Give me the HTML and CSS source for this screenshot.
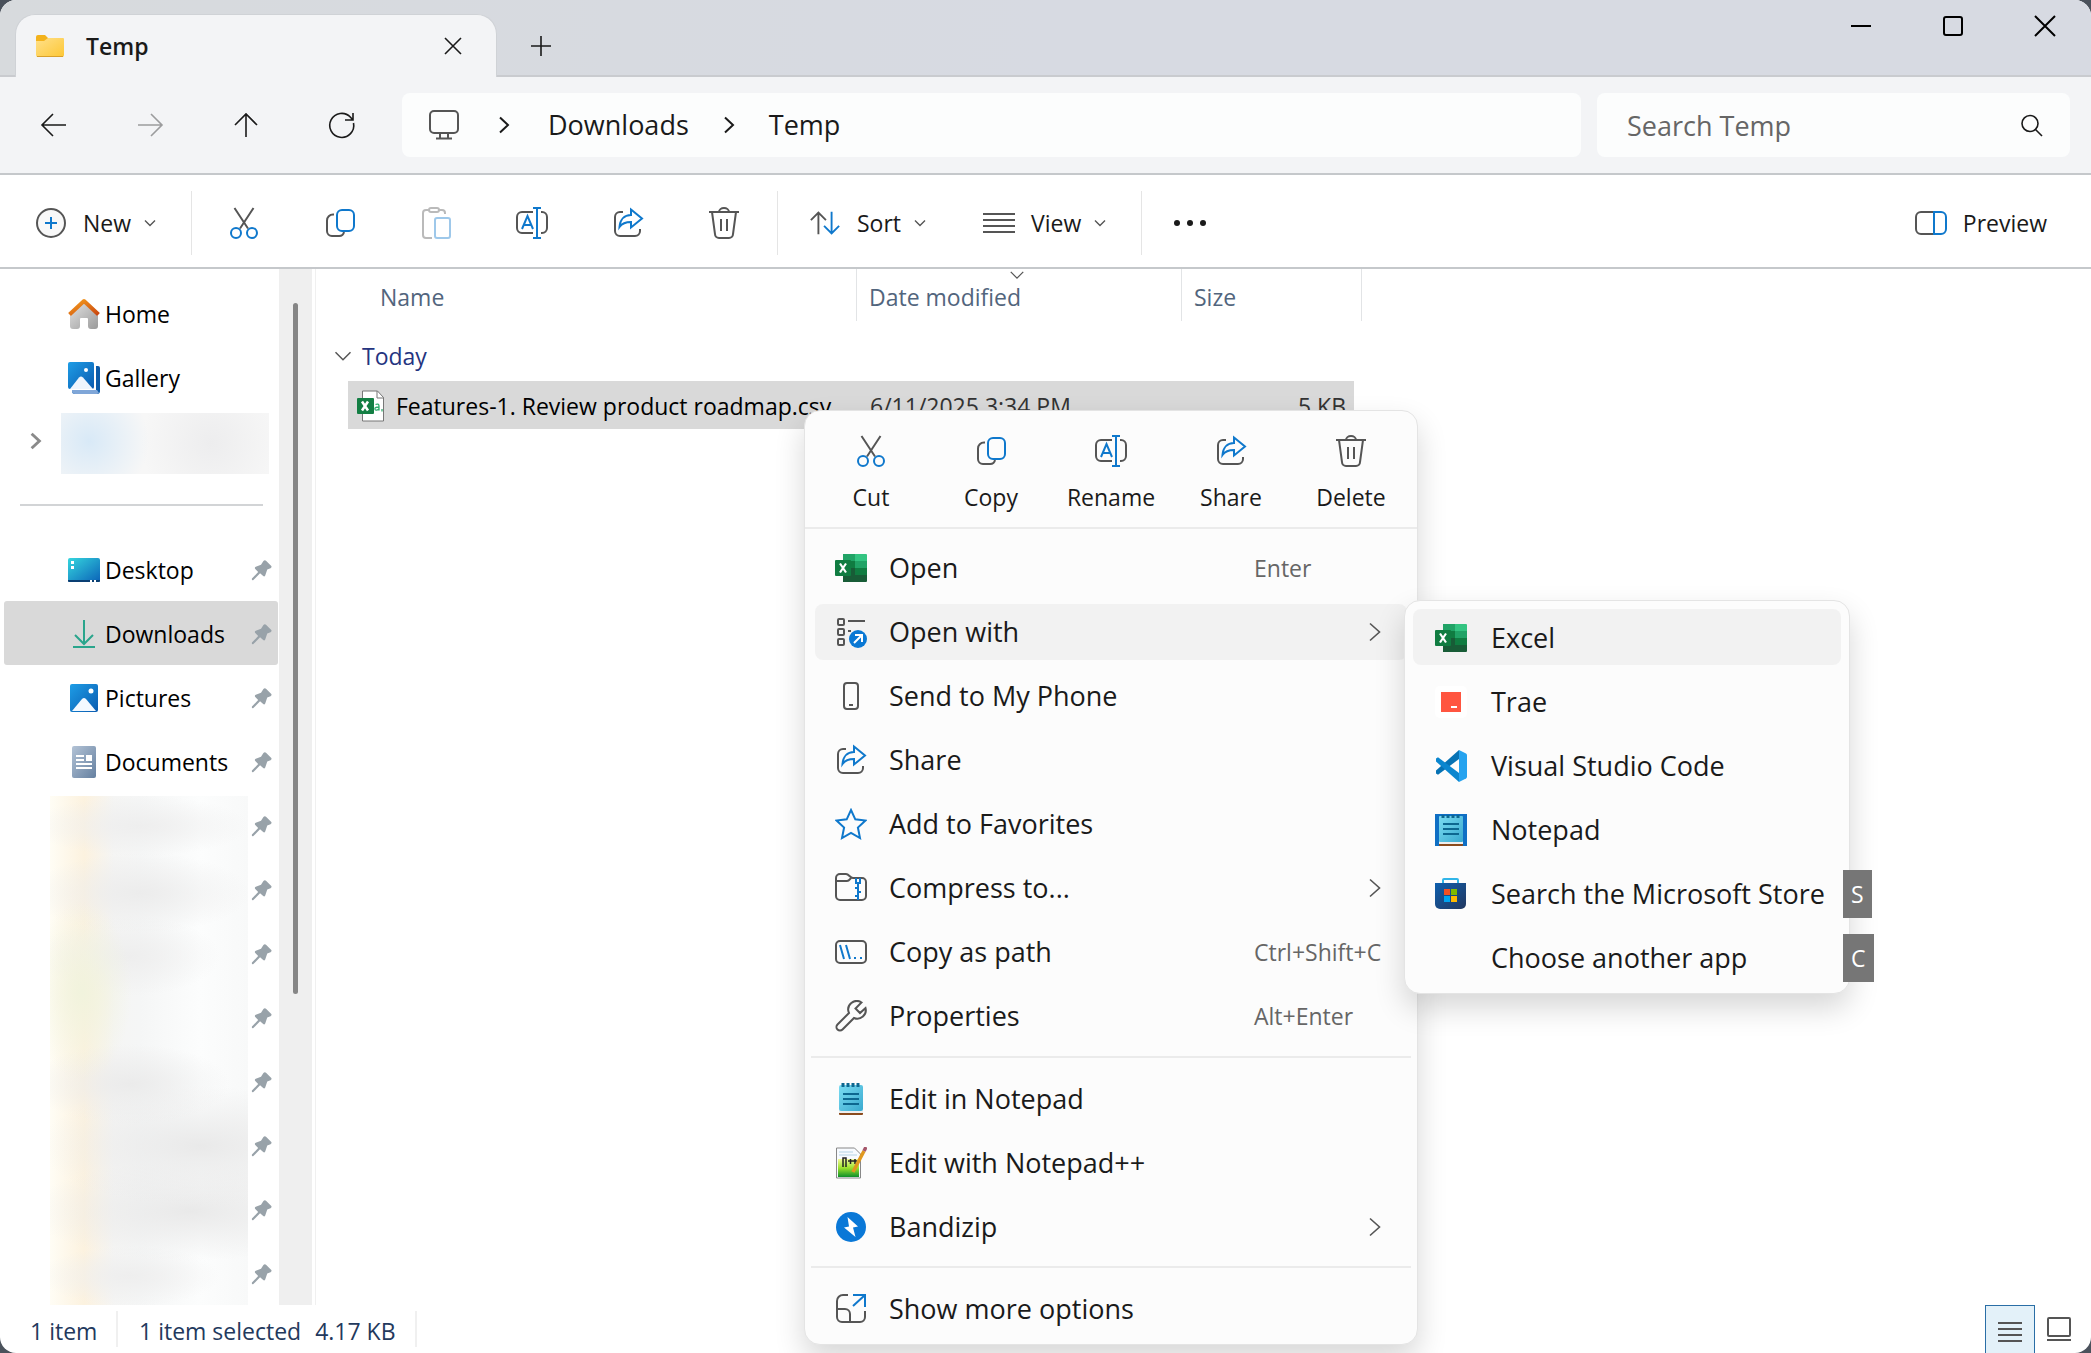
FILE: index.html
```html
<!DOCTYPE html>
<html lang="en">
<head>
<meta charset="utf-8">
<title>Temp</title>
<link rel="stylesheet" href="styles.css">
</head>
<body>
<svg class="sprite" aria-hidden="true">
  <defs>
    <linearGradient id="g-folder" x1="0" y1="0" x2="1" y2="1"><stop offset="0" stop-color="#ffe08a"/><stop offset="1" stop-color="#fdc735"/></linearGradient>
    <linearGradient id="g-roof" x1="0" y1="0" x2="1" y2="1"><stop offset="0" stop-color="#f7a01e"/><stop offset="1" stop-color="#c8450f"/></linearGradient>
    <linearGradient id="g-wall" x1="0" y1="0" x2="1" y2="1"><stop offset="0" stop-color="#e2e2e2"/><stop offset="1" stop-color="#9a9a9a"/></linearGradient>
    <linearGradient id="g-photo" x1="0" y1="0" x2="1" y2="1"><stop offset="0" stop-color="#1e9de6"/><stop offset="1" stop-color="#0a5bb0"/></linearGradient>
    <linearGradient id="g-desk" x1="0" y1="0" x2="1" y2="1"><stop offset="0" stop-color="#35d6de"/><stop offset="1" stop-color="#0b62b8"/></linearGradient>
    <linearGradient id="g-doc" x1="0" y1="0" x2="1" y2="1"><stop offset="0" stop-color="#b3c3d6"/><stop offset="1" stop-color="#6580a0"/></linearGradient>
    <linearGradient id="g-note" x1="0" y1="0" x2="1" y2="1"><stop offset="0" stop-color="#7bdcf2"/><stop offset="1" stop-color="#39a9cf"/></linearGradient>
    <linearGradient id="g-npp" x1="0" y1="0" x2="0" y2="1"><stop offset="0" stop-color="#f4fb9a"/><stop offset=".5" stop-color="#9be02c"/><stop offset="1" stop-color="#0d8f2a"/></linearGradient>
    <linearGradient id="g-store" x1="0" y1="0" x2="1" y2="1"><stop offset="0" stop-color="#0e5fae"/><stop offset="1" stop-color="#22375f"/></linearGradient>
  </defs>
  <symbol id="folder" viewBox="0 0 32 32"><path d="M2 7a2 2 0 0 1 2-2h7l3 3v5H2z" fill="#f3b21b"/><path d="M2 11h8l4-3h15a1 1 0 0 1 1 1v16a2 2 0 0 1-2 2H4a2 2 0 0 1-2-2z" fill="url(#g-folder)"/><path d="M3 26.500h26" stroke="#d9a02a"/></symbol>
  <symbol id="x" viewBox="0 0 32 32"><path d="M8 8l16 16M24 8L8 24"/></symbol>
  <symbol id="plus" viewBox="0 0 32 32"><path d="M16 6v20M6 16h20"/></symbol>
  <symbol id="min" viewBox="0 0 32 32"><path d="M6 16h20"/></symbol>
  <symbol id="max" viewBox="0 0 32 32"><rect x="7" y="7" width="18" height="18" rx="2"/></symbol>
  <symbol id="winx" viewBox="0 0 32 32"><path d="M6 6l20 20M26 6L6 26"/></symbol>
  <symbol id="back" viewBox="0 0 32 32"><path d="M28 16H4M15 5L4 16l11 11"/></symbol>
  <symbol id="fwd" viewBox="0 0 32 32"><path d="M4 16h24M17 5l11 11-11 11"/></symbol>
  <symbol id="up" viewBox="0 0 32 32"><path d="M16 28V5M5 16L16 5l11 11"/></symbol>
  <symbol id="refresh" viewBox="0 0 32 32"><path d="M27.500 14A12 12 0 1 1 24.500 8.200l2 2.300M27 4v7h-8"/></symbol>
  <symbol id="monitor" viewBox="0 0 32 32"><rect x="2" y="2" width="28" height="22" rx="4"/><path d="M12 24v5M20 24v5M8 29.500h16"/></symbol>
  <symbol id="cright" viewBox="0 0 32 32"><path d="M12 8.500l8 7.500-8 7.500"/></symbol>
  <symbol id="cmenu" viewBox="0 0 32 32"><path d="M11 7.500l9.500 8.500-9.500 8.500"/></symbol>
  <symbol id="cdown" viewBox="0 0 16 16"><path d="M3 5.500l5 5 5-5"/></symbol>
  <symbol id="search" viewBox="0 0 32 32"><circle cx="14" cy="13.500" r="8"/><path d="M19.500 19.500L26 26"/></symbol>
  <symbol id="new" viewBox="0 0 32 32"><circle cx="16" cy="16" r="14" fill="#f8f8f8"/><path class="blue" d="M16 10v12M10 16h12"/></symbol>
  <symbol id="cut" viewBox="0 0 32 32"><path d="M6.500 1l13.500 20.500M25.500 1L12 21.500"/><circle class="blue" cx="8" cy="26" r="5"/><circle class="blue" cx="24" cy="26" r="5"/></symbol>
  <symbol id="copy" viewBox="0 0 32 32"><path d="M10 7.500H9a6 6 0 0 0-6 6V24a5 5 0 0 0 5 5h7a5 5 0 0 0 5-4"/><rect class="blue" x="13" y="3" width="17" height="21" rx="5"/></symbol>
  <symbol id="paste" viewBox="0 0 32 32"><path d="M9 3H6a3 3 0 0 0-3 3v22a3 3 0 0 0 3 3h6M19 3h3a3 3 0 0 1 3 3v1"/><rect x="9" y="1" width="10" height="4" rx="2"/><rect class="blue" x="15" y="11" width="15" height="20" rx="2"/></symbol>
  <symbol id="rename" viewBox="0 0 32 32"><path d="M17 5H6a5 5 0 0 0-5 5v11a5 5 0 0 0 5 5h11M25 5h1a5 5 0 0 1 5 5v11a5 5 0 0 1-5 5h-1"/><path class="blue" d="M21 1v30M17 1h8M17 31h8M6 22l5.500-13L17 22M8 18h7"/></symbol>
  <symbol id="share" viewBox="0 0 32 32"><path d="M11 5H8a5 5 0 0 0-5 5v14a5 5 0 0 0 5 5h15a5 5 0 0 0 5-5v-2"/><path class="blue" d="M19 2.500l11 9-11 9v-5.500c-5 0-9 1.500-11.500 5 .5-7 4.500-12 11.500-12z"/></symbol>
  <symbol id="delete" viewBox="0 0 32 32"><path d="M1 5h30M11 5a5 4 0 0 1 10 0"/><path d="M4 5l3 22a4 4 0 0 0 4 4h10a4 4 0 0 0 4-4l3-22M13 12v12M19 12v12"/></symbol>
  <symbol id="sort" viewBox="0 0 34 32"><path d="M10 28V5M2 13l8-8 8 8"/><path class="blue" d="M24 4v23M16 19l8 8 8-8"/></symbol>
  <symbol id="lines" viewBox="0 0 32 32"><path d="M0 7h32M0 13h32M0 19h32M0 25h32"/></symbol>
  <symbol id="dots" viewBox="0 0 32 32"><g fill="#1a1a1a" stroke="none"><circle cx="3" cy="16" r="3"/><circle cx="16" cy="16" r="3"/><circle cx="29" cy="16" r="3"/></g></symbol>
  <symbol id="preview" viewBox="0 0 32 32"><path d="M19 5H6a5 5 0 0 0-5 5v12a5 5 0 0 0 5 5h13"/><path class="blue" d="M19 5h7a5 5 0 0 1 5 5v12a5 5 0 0 1-5 5h-7z"/></symbol>
  <symbol id="home" viewBox="0 0 32 32"><path d="M16 5L2 18v10a3 3 0 0 0 3 3h4a3 3 0 0 0 3-3v-7a1 1 0 0 1 1-1h6a1 1 0 0 1 1 1v7a3 3 0 0 0 3 3h4a3 3 0 0 0 3-3V18z" fill="url(#g-wall)"/><path d="M1.500 16.500L16 3l14.500 13.500" fill="none" stroke="url(#g-roof)" stroke-width="4" stroke-linejoin="round"/></symbol>
  <symbol id="gallery" viewBox="0 0 32 32"><path d="M4 4h26a2 2 0 0 1 2 2v23a3 3 0 0 1-3 3H7a3 3 0 0 1-3-3z" fill="#0d5ba8"/><path d="M4 28h25l2 3-2 1H7a3 3 0 0 1-3-3z" fill="#7fa6d8"/><path d="M0 0h28v28H0z" fill="#fff"/><rect width="26" height="27" rx="2" fill="url(#g-photo)"/><path d="M2 27l9-11.500a3 3 0 0 1 4 0L25 27z" fill="#eef5fd"/><circle cx="18" cy="8" r="2" fill="#fff"/></symbol>
  <symbol id="desktop" viewBox="0 0 32 32"><rect y="4" width="32" height="24" rx="2" fill="url(#g-desk)"/><path d="M0 26h32v1a1 1 0 0 1-1 1H1a1 1 0 0 1-1-1z" fill="#0a3f73"/><path d="M3 7h3v3H3zM3 12h3v3H3zM22 26h2v2h-2zM26 26h2v2h-2z" fill="#fff"/></symbol>
  <symbol id="download" viewBox="0 0 32 32"><path d="M16 2v23M7 17l9 9 9-9M5 29h22" fill="none" stroke="#2aa58c" stroke-width="2"/></symbol>
  <symbol id="pictures" viewBox="0 0 32 32"><rect x="2" y="2" width="28" height="28" rx="2" fill="url(#g-photo)"/><path d="M4 29l10-12a3 3 0 0 1 4 0l10 12z" fill="#f4f9ff"/><circle cx="23" cy="9" r="2.500" fill="#fff"/></symbol>
  <symbol id="documents" viewBox="0 0 32 32"><rect x="4" width="24" height="32" rx="2" fill="url(#g-doc)"/><path d="M8 10h8M8 14h8M8 18h16M8 22h16" stroke="#fff" stroke-width="2"/><path d="M18 9h6v6h-6z" fill="#fff"/></symbol>
  <symbol id="pin" viewBox="0 0 22 22"><path d="M13 1c1-1 2-1 3 0l5 5c1 1 .5 2.200-.5 2.600L17 10l-2 6c-.3 1.500-1.500 1.500-2.500.5L9.500 14 2.500 21c-1 .5-2 0-1.500-1.500l6.500-7-3-3c-.8-.8-.6-2 .5-2.300L10.500 5z" fill="#98a2a9"/></symbol>
  <symbol id="csv" viewBox="0 0 28 32"><path d="M5.500 1h15l6 6.500V31h-21z" fill="#fff" stroke="#777"/><path d="M20 1v7h7" fill="none" stroke="#777"/><rect y="8" width="17" height="16" rx="1" fill="#137e43"/><path d="M5 11.500l6 9M11 11.500l-6 9" stroke="#fff" stroke-width="2.500"/><path d="M18.500 14.500c2-1 3.500-.3 3.500 1.500v4.500M22 17c-3.500 0-4.500 1-4 2.300.5 1.200 3 1 4-.8M25 19v2.500" fill="none" stroke="#2fae6d" stroke-width="1.300"/></symbol>
  <symbol id="excel" viewBox="0 0 32 32"><path d="M8 2h12v7H8z" fill="#21a366"/><path d="M20 2h11a1 1 0 0 1 1 1v6H20z" fill="#33c481"/><path d="M8 9h12v7H8z" fill="#107c41"/><path d="M20 9h12v7H20z" fill="#21a366"/><path d="M8 16h12v14H8z" fill="#185c37"/><path d="M20 16h12v7H20z" fill="#107c41"/><path d="M8 23h24v6a1 1 0 0 1-1 1H9a1 1 0 0 1-1-1z" fill="#185c37"/><rect y="8" width="16" height="16" rx="1" fill="#107c41"/><path d="M5 11.500l6 9M11 11.500l-6 9" stroke="#fff" stroke-width="2.200"/></symbol>
  <symbol id="openwith" viewBox="0 0 32 32"><rect x="3" y="3" width="6" height="6" rx="1"/><rect x="3" y="13" width="6" height="6" rx="1"/><rect x="3" y="23" width="6" height="6" rx="1"/><path d="M13 5h17M13 15h3"/><circle cx="23" cy="23" r="9" fill="#0a78d4" stroke="none"/><path d="M19 27l8-8M20 19h7v7" stroke="#fff"/></symbol>
  <symbol id="phone" viewBox="0 0 32 32"><rect x="9" y="3" width="14" height="26" rx="3"/><path d="M14 25h4"/></symbol>
  <symbol id="star" viewBox="0 0 32 32"><path class="blue" d="M16 2l4.300 9.300 10.200 1.200-7.600 7 2.100 10.500-9-5-9 5 2.100-10.500-7.600-7 10.200-1.200z"/></symbol>
  <symbol id="zip" viewBox="0 0 32 32"><path d="M1 9V6a4 4 0 0 1 4-4h6c3 0 4 4 7 4h9a4 4 0 0 1 4 4v14a4 4 0 0 1-4 4H5a4 4 0 0 1-4-4zM1 9h11c2 0 3-2 4-3"/><path class="blue" d="M21 6v5h4V6M23 11v17M20 16h3M23 20h3M20 24h3"/></symbol>
  <symbol id="path" viewBox="0 0 32 32"><rect x="1" y="5" width="30" height="22" rx="4"/><path class="blue" d="M5 9l4 14M11 9l4 14M19 22h2M25 22h2"/></symbol>
  <symbol id="wrench" viewBox="0 0 32 32"><path d="M26.500 2.500A8.500 8.500 0 0 0 14 13L2.500 24.500a3.500 3.500 0 0 0 5 5L19 18a8.500 8.500 0 0 0 11.500-10L25 13l-4.500-4.500z"/></symbol>
  <symbol id="notepad" viewBox="0 0 32 32"><rect x="4" y="28" width="24" height="4" rx="1" fill="#8a4b1d"/><rect x="4" y="27" width="24" height="3" fill="#eee"/><rect x="4" y="2" width="24" height="26" rx="2" fill="url(#g-note)"/><path d="M8 11h16M8 16h16M8 21h16" stroke="#0d6790" stroke-width="2"/><path d="M8 0v4M13 0v4M18 0v4M23 0v4" stroke="#0d6790" stroke-width="3"/></symbol>
  <symbol id="notepadtile" viewBox="0 0 32 32"><path d="M0 0h32v32H0z" fill="#0f6fc4"/><rect x="4" y="26" width="24" height="6" rx="1" fill="#8a4b1d"/><rect x="4" y="25" width="24" height="5" fill="#eee"/><rect x="4" y="2" width="24" height="26" rx="1" fill="url(#g-note)"/><path d="M8 10h16M8 15h16M8 20h16" stroke="#0d6790" stroke-width="2"/><path d="M8 1v3M13 1v3M18 1v3M23 1v3" stroke="#0d6790" stroke-width="3"/></symbol>
  <symbol id="npp" viewBox="0 0 32 32"><path d="M1.500 1h18l6 6v24h-24z" fill="#f8fbff" stroke="#888"/><path d="M3 12h21v18H3z" fill="url(#g-npp)"/><path d="M4 5h14M4 8h18" stroke="#b5d4e6"/><path d="M8 20v-9h3v9M13 14h5M15.500 12v5M18 14h4M20 12v5" fill="none" stroke="#222" stroke-width="1.500"/><path d="M29 4L18 25" stroke="#e0981f" stroke-width="3.500"/><path d="M31 0l-2 4" stroke="#a5566a" stroke-width="3.500"/></symbol>
  <symbol id="bandizip" viewBox="0 0 32 32"><circle cx="16" cy="16" r="15" fill="#0a78d7"/><path d="M12.500 6l10.500 9.500-5 1 2.500 9.500L9 16.500l5-1z" fill="#fff"/></symbol>
  <symbol id="more" viewBox="0 0 32 32"><path d="M13 2H8a6 6 0 0 0-6 6v16a5 5 0 0 0 5 5h18a5 5 0 0 0 5-5v-6M2 16h8a5 5 0 0 1 5 5v8"/><path class="blue" d="M18 2h12v12M30 2L18 13"/></symbol>
  <symbol id="trae" viewBox="0 0 32 32"><rect width="32" height="32" rx="5" fill="#fff"/><path d="M6 6h20v20H6z" fill="#ff5540"/><path d="M16 20h6v2h-6z" fill="#fff"/></symbol>
  <symbol id="vscode" viewBox="0 0 32 32"><path d="M24 0L1 20.500v3l2 1.300L24 9z" fill="#0672b4"/><path d="M24 32L1 11.500v-3l2-1.300L24 23z" fill="#0a86cf"/><path d="M24 0l7 3.500a2 2 0 0 1 1 1.700v21.600a2 2 0 0 1-1 1.700L24 32z" fill="#26a3ef"/></symbol>
  <symbol id="store" viewBox="0 0 32 32"><path d="M8 6V2a1 1 0 0 1 1-1h13a1 1 0 0 1 1 1v4" fill="none" stroke="#31b5e8" stroke-width="2"/><path d="M0 5h31v21a5 5 0 0 1-5 5H5a5 5 0 0 1-5-5z" fill="url(#g-store)"/><path d="M9 11h6v6H9z" fill="#f25022"/><path d="M16 11h6v6h-6z" fill="#7fba00"/><path d="M9 18h6v6H9z" fill="#00a4ef"/><path d="M16 18h6v6h-6z" fill="#ffb900"/></symbol>
  <symbol id="large" viewBox="0 0 32 32"><rect x="5" y="4" width="22" height="18" rx="1"/><path d="M4 26h24"/></symbol>
  <symbol id="details" viewBox="0 0 32 32"><path d="M4 8h24M4 14h24M4 20h24M4 26h24"/></symbol>
</svg>

<div class="window">
  <header class="titlebar">
    <div class="tab">
      <svg class="pic"><use href="#folder"/></svg>
      <span class="tab-title">Temp</span>
      <button class="bare" aria-label="Close tab"><svg class="line"><use href="#x"/></svg></button>
    </div>
    <button class="bare add" aria-label="New tab"><svg class="line"><use href="#plus"/></svg></button>
    <div class="caption">
      <button class="bare" aria-label="Minimize"><svg class="line"><use href="#min"/></svg></button>
      <button class="bare" aria-label="Maximize"><svg class="line"><use href="#max"/></svg></button>
      <button class="bare" aria-label="Close"><svg class="line"><use href="#winx"/></svg></button>
    </div>
  </header>

  <div class="navbar">
    <div class="history">
      <button class="bare" aria-label="Back"><svg class="line"><use href="#back"/></svg></button>
      <button class="bare" aria-label="Forward" disabled><svg class="line"><use href="#fwd"/></svg></button>
      <button class="bare" aria-label="Up"><svg class="line"><use href="#up"/></svg></button>
      <button class="bare" aria-label="Refresh"><svg class="line"><use href="#refresh"/></svg></button>
    </div>
    <nav class="address" aria-label="Address">
      <svg class="line monitor"><use href="#monitor"/></svg>
      <svg class="line crumb"><use href="#cright"/></svg>
      <a href="#downloads">Downloads</a>
      <svg class="line crumb"><use href="#cright"/></svg>
      <a href="#temp">Temp</a>
    </nav>
    <label class="search">
      <input type="text" placeholder="Search Temp" aria-label="Search Temp">
      <svg class="line"><use href="#search"/></svg>
    </label>
  </div>

  <div class="commands">
    <button class="cmd new"><svg class="icon"><use href="#new"/></svg>New<svg class="caret"><use href="#cdown"/></svg></button>
    <span class="sep"></span>
    <div class="tools">
      <button class="bare" aria-label="Cut"><svg class="icon"><use href="#cut"/></svg></button>
      <button class="bare" aria-label="Copy"><svg class="icon"><use href="#copy"/></svg></button>
      <button class="bare" aria-label="Paste" disabled><svg class="icon"><use href="#paste"/></svg></button>
      <button class="bare" aria-label="Rename"><svg class="icon"><use href="#rename"/></svg></button>
      <button class="bare" aria-label="Share"><svg class="icon"><use href="#share"/></svg></button>
      <button class="bare" aria-label="Delete"><svg class="icon"><use href="#delete"/></svg></button>
    </div>
    <span class="sep"></span>
    <button class="cmd sort"><svg class="icon"><use href="#sort"/></svg>Sort<svg class="caret"><use href="#cdown"/></svg></button>
    <button class="cmd view"><svg class="icon"><use href="#lines"/></svg>View<svg class="caret"><use href="#cdown"/></svg></button>
    <span class="sep"></span>
    <button class="bare overflow" aria-label="See more"><svg class="icon"><use href="#dots"/></svg></button>
    <button class="cmd preview"><svg class="icon"><use href="#preview"/></svg>Preview</button>
  </div>

  <div class="body">
    <nav class="sidebar" aria-label="Folders">
      <a class="place" href="#home"><svg class="pic"><use href="#home"/></svg><span>Home</span></a>
      <a class="place" href="#gallery"><svg class="pic"><use href="#gallery"/></svg><span>Gallery</span></a>
      <div class="account"><svg class="expand"><use href="#cright"/></svg><div class="smudge cloud"></div></div>
      <hr>
      <a class="place" href="#desktop"><svg class="pic"><use href="#desktop"/></svg><span>Desktop</span><svg class="pin"><use href="#pin"/></svg></a>
      <a class="place current" href="#downloads"><svg class="pic"><use href="#download"/></svg><span>Downloads</span><svg class="pin"><use href="#pin"/></svg></a>
      <a class="place" href="#pictures"><svg class="pic"><use href="#pictures"/></svg><span>Pictures</span><svg class="pin"><use href="#pin"/></svg></a>
      <a class="place" href="#documents"><svg class="pic docs"><use href="#documents"/></svg><span>Documents</span><svg class="pin"><use href="#pin"/></svg></a>
      <div class="hidden-places">
        <div class="smudge folders"></div>
        <div class="pins">
          <svg class="pin"><use href="#pin"/></svg><svg class="pin"><use href="#pin"/></svg><svg class="pin"><use href="#pin"/></svg><svg class="pin"><use href="#pin"/></svg>
          <svg class="pin"><use href="#pin"/></svg><svg class="pin"><use href="#pin"/></svg><svg class="pin"><use href="#pin"/></svg><svg class="pin"><use href="#pin"/></svg>
        </div>
      </div>
    </nav>
    <div class="scrollbar"><div class="thumb"></div></div>
    <main class="files">
      <table>
        <colgroup><col class="c-name"><col class="c-date"><col class="c-size"></colgroup>
        <thead>
          <tr><th scope="col">Name</th><th scope="col">Date modified<svg class="caret sorted"><use href="#cdown"/></svg></th><th scope="col">Size</th></tr>
        </thead>
        <tbody>
          <tr class="group"><th colspan="3" scope="rowgroup"><button><svg class="caret"><use href="#cdown"/></svg>Today</button></th></tr>
          <tr class="file"><td><span class="filename"><svg><use href="#csv"/></svg>Features-1. Review product roadmap.csv</span></td><td>6/11/2025 3:34 PM</td><td>5 KB</td></tr>
        </tbody>
      </table>
    </main>
  </div>

  <footer class="status">
    <span class="count">1 item</span>
    <span class="selected"><span>1 item selected</span><span>4.17 KB</span></span>
    <div class="modes">
      <button class="on" aria-label="Details"><svg class="icon"><use href="#details"/></svg></button>
      <button aria-label="Large icons"><svg class="icon"><use href="#large"/></svg></button>
    </div>
  </footer>
</div>

<div class="menu context" role="menu">
  <div class="quick">
    <button role="menuitem"><svg class="icon"><use href="#cut"/></svg>Cut</button>
    <button role="menuitem"><svg class="icon"><use href="#copy"/></svg>Copy</button>
    <button role="menuitem"><svg class="icon"><use href="#rename"/></svg>Rename</button>
    <button role="menuitem"><svg class="icon"><use href="#share"/></svg>Share</button>
    <button role="menuitem"><svg class="icon"><use href="#delete"/></svg>Delete</button>
  </div>
  <div class="items">
    <button class="item" role="menuitem"><svg class="pic"><use href="#excel"/></svg>Open<kbd>Enter</kbd></button>
    <button class="item active" role="menuitem"><svg class="icon"><use href="#openwith"/></svg>Open with<svg class="icon more"><use href="#cmenu"/></svg></button>
    <button class="item" role="menuitem"><svg class="icon"><use href="#phone"/></svg>Send to My Phone</button>
    <button class="item" role="menuitem"><svg class="icon"><use href="#share"/></svg>Share</button>
    <button class="item" role="menuitem"><svg class="icon"><use href="#star"/></svg>Add to Favorites</button>
    <button class="item" role="menuitem"><svg class="icon"><use href="#zip"/></svg>Compress to...<svg class="icon more"><use href="#cmenu"/></svg></button>
    <button class="item" role="menuitem"><svg class="icon"><use href="#path"/></svg>Copy as path<kbd>Ctrl+Shift+C</kbd></button>
    <button class="item" role="menuitem"><svg class="icon"><use href="#wrench"/></svg>Properties<kbd>Alt+Enter</kbd></button>
  </div>
  <div class="items ruled">
    <button class="item" role="menuitem"><svg class="pic"><use href="#notepad"/></svg>Edit in Notepad</button>
    <button class="item" role="menuitem"><svg class="pic"><use href="#npp"/></svg>Edit with Notepad++</button>
    <button class="item" role="menuitem"><svg class="pic"><use href="#bandizip"/></svg>Bandizip<svg class="icon more"><use href="#cmenu"/></svg></button>
  </div>
  <div class="items ruled last">
    <button class="item" role="menuitem"><svg class="icon"><use href="#more"/></svg>Show more options</button>
  </div>
</div>

<div class="menu submenu" role="menu">
  <button class="item active" role="menuitem"><svg class="pic"><use href="#excel"/></svg>Excel</button>
  <button class="item" role="menuitem"><svg class="pic"><use href="#trae"/></svg>Trae</button>
  <button class="item" role="menuitem"><svg class="pic"><use href="#vscode"/></svg>Visual Studio Code</button>
  <button class="item" role="menuitem"><svg class="pic"><use href="#notepadtile"/></svg>Notepad</button>
  <button class="item" role="menuitem"><svg class="pic"><use href="#store"/></svg>Search the Microsoft Store<span class="keytip">S</span></button>
  <button class="item" role="menuitem"><span class="pic"></span>Choose another app<span class="keytip">C</span></button>
</div>
</body>
</html>
```

FILE: styles.css
```css
* { box-sizing: border-box; }

body {
  margin: 0;
  background: #4b525c;
  color: #1a1a1a;
  font: 23px/32px "Open Sans", "Noto Sans", sans-serif;
}

button {
  border: 0;
  padding: 0;
  background: none;
  color: inherit;
  font: inherit;
  text-align: left;
}

a { color: inherit; text-decoration: none; }

svg { display: block; flex: none; }

.sprite { position: absolute; width: 0; height: 0; }

.icon, .line, .pic { width: 32px; height: 32px; flex: none; }

.icon, .line, .caret, .expand { fill: none; stroke: #555; stroke-width: 2; }
.line { stroke: #1a1a1a; stroke-width: 1.6; }
.monitor, .crumb { stroke-width: 2; }
.blue { stroke: #0f78cc; }
.caret { width: 16px; height: 16px; stroke-width: 1.4; }

.bare {
  display: flex;
  align-items: center;
  justify-content: center;
  flex: none;
}

.window {
  display: flex;
  flex-direction: column;
  height: 100vh;
  overflow: hidden;
  border-radius: 16px;
  background: #fff;
}

/* title bar */
.titlebar {
  display: flex;
  height: 77px;
  padding: 14px 0 0 15px;
  background: linear-gradient(90deg, #d7dadd, #d7dae2 50%);
  border-bottom: 2px solid #c9cbcf;
}

.tab {
  display: flex;
  align-items: center;
  width: 482px;
  height: 63px;
  padding: 0 27px 0 18px;
  border: 1px solid #cfd2d6;
  border-bottom: 0;
  border-radius: 20px 20px 0 0;
  background: #f3f4f6;
}

.tab-title { flex: 1; margin-left: 20px; font-weight: 600; }
.add { width: 88px; padding-top: 2px; }
.caption { display: flex; align-items: flex-start; margin-left: auto; }
.caption .bare { width: 92px; height: 24px; }
.caption .line { stroke: #000; stroke-width: 2; }

/* address row */
.navbar {
  display: flex;
  gap: 16px;
  height: 98px;
  padding: 16px 21px 16px 6px;
  background: #f3f4f6;
  border-bottom: 2px solid #c5c8cb;
}

.history { display: flex; width: 380px; }
.history .bare { width: 96px; }
.bare:disabled { opacity: .4; }

.address, .search {
  display: flex;
  align-items: center;
  border-radius: 8px;
  background: #fcfdfd;
  font-size: 27px;
}

.address { flex: 1; padding-left: 26px; }
.monitor { stroke: #555; }
.crumb { margin: 0 28px; }
a + .crumb { margin: 0 24px; }
.search { width: 473px; padding: 2px 22px 0 30px; }

.search input {
  flex: 1;
  min-width: 0;
  border: 0;
  padding: 0;
  background: none;
  color: #1a1a1a;
  font: inherit;
}

.search input::placeholder { color: #666; opacity: 1; }

/* command bar */
.commands {
  display: flex;
  align-items: center;
  height: 94px;
  padding: 4px 44px 0 35px;
  border-bottom: 2px solid #c5c8cb;
}

.cmd { display: flex; align-items: center; gap: 16px; }
.cmd .caret { margin-left: -5px; }
.new { width: 156px; }
.sort { width: 174px; margin-left: 31px; }
.view { width: 158px; }
.sep { width: 1px; height: 64px; background: #e5e5e5; }
.tools { display: flex; padding: 0 5px 0 4px; }
.tools .bare { width: 96px; }
.overflow { margin-left: 32px; }
.preview { margin-left: auto; }

/* folder tree */
.body { display: flex; flex: 1; min-height: 0; }

.sidebar {
  width: 279px;
  padding-top: 12px;
  overflow: hidden;
  color: #000;
}

.place {
  display: flex;
  align-items: center;
  height: 64px;
  margin: 0 1px 0 4px;
  padding: 2px 6px 0 64px;
  border-radius: 3px;
}

.place span { flex: 1; margin-left: 5px; }
.current { background: #d9d9d9; }
.pin { width: 21px; height: 21px; }

.account { display: flex; align-items: center; height: 64px; padding-left: 20px; }
.expand { width: 31px; height: 32px; stroke: #8a8a8a; stroke-width: 3; }
.smudge { background-color: #f7f7f7; }

.cloud {
  width: 208px;
  height: 61px;
  margin: 4px 0 0 10px;
  background-image: radial-gradient(circle at 28px 28px, #d8e9f7, transparent 60px), radial-gradient(circle at 150px 30px, #ededee, transparent 70px);
}

hr { margin: 31px 16px 31px 20px; border: 0; border-top: 2px solid #d2d4d6; }

.hidden-places { display: flex; padding: 3px 7px 3px 50px; }

.folders {
  width: 198px;
  margin-right: 3px;
  background-color: transparent;
  background-image:
    radial-gradient(ellipse 50px 90px at 32px 195px, #f1f3dd, transparent),
    radial-gradient(ellipse 110px 30px at 90px 30px, #eeeeee, transparent),
    radial-gradient(ellipse 110px 40px at 90px 97px, #ececec, transparent),
    radial-gradient(ellipse 90px 40px at 80px 160px, #eeeeee, transparent),
    radial-gradient(ellipse 100px 40px at 80px 288px, #ebebeb, transparent),
    radial-gradient(ellipse 160px 60px at 150px 350px, #e9e9e9, transparent),
    radial-gradient(ellipse 160px 50px at 140px 415px, #e9e9e9, transparent),
    radial-gradient(ellipse 90px 30px at 80px 480px, #eeeeee, transparent),
    linear-gradient(90deg, #fffdf5, #fcf2df 34px, #f5f5f4 64px, #f5f6f6 90px, #fcfdfd 150px, #f8f9f9);
}

.pins { display: flex; flex-direction: column; gap: 43px; padding: 20px 0 20px; }

.scrollbar { width: 33px; padding: 34px 14px 0; background: #efefef; }
.thumb { height: 69%; border-radius: 3px; background: #868686; }

/* file list */
.files { flex: 1; margin-left: 3px; padding-left: 16px; border-left: 1px solid #f0f0f0; }

table { table-layout: fixed; width: 1030px; border-spacing: 0; }
.c-name { width: 525px; }
.c-date { width: 325px; }
.c-size { width: 180px; }

thead th {
  position: relative;
  height: 52px;
  padding: 4px 12px 0;
  border-right: 1px solid #e2e4e6;
  color: #52657d;
  font-weight: 400;
  text-align: left;
}

thead th:first-child { padding-left: 48px; }
.caret.sorted { position: absolute; top: -4px; left: calc(50% - 12px); width: 20px; height: 20px; stroke-width: 1; }

.group th { height: 60px; padding: 10px 0 0; font-weight: 400; text-align: left; }
.group button { display: flex; align-items: center; gap: 7px; color: #25347f; }
.group .caret { width: 24px; height: 24px; margin-left: -1px; stroke-width: 1; }

.file td { height: 48px; padding: 2px 13px 0; background: #d9d9d9; background-clip: padding-box; color: #333; }
.file td:first-child { padding-left: 9px; padding-right: 0; border-left: 16px solid transparent; color: #000; }
.file td:last-child { padding-right: 8px; border-right: 8px solid transparent; text-align: right; }
.filename { display: flex; align-items: center; gap: 11px; white-space: nowrap; }
.filename svg { width: 28px; height: 32px; }

/* status bar */
.status {
  display: flex;
  align-items: center;
  height: 48px;
  padding: 0 8px 0 30px;
  color: #23395d;
  white-space: nowrap;
}

.status > span { padding-top: 4px; border-right: 2px solid #f0f0f0; }
.count { width: 88px; }
.selected { display: flex; gap: 14px; padding: 0 19px 0 21px; }
.modes { display: flex; align-self: stretch; margin-left: auto; }
.modes button { width: 48px; padding: 2px 8px 0; }
.modes .on { width: 50px; border: 1px solid #2a6ea6; border-bottom: 0; background: #e3f1f9; }

/* pop-up menus */
.menu {
  position: absolute;
  border: 1px solid #e4e4e4;
  border-radius: 16px;
  background: #fcfcfc;
  box-shadow: 0 14px 30px rgba(0, 0, 0, .16);
  font-size: 27px;
}

.context { top: 410px; left: 804px; width: 614px; }

.quick {
  display: grid;
  grid-template-columns: repeat(5, 120px);
  padding: 24px 6px 14px;
  border-bottom: 2px solid #ebebeb;
  font-size: 23px;
}

.quick button {
  display: flex;
  flex-direction: column;
  align-items: center;
  gap: 14px;
}

.items { display: grid; gap: 8px; padding: 11px 10px 12px; }
.items.ruled { margin: 0 6px; padding: 13px 4px 11px; border-top: 2px solid #ebebeb; }
.items.last { padding-bottom: 7px; }

.item {
  display: flex;
  align-items: center;
  height: 56px;
  padding-left: 20px;
  border-radius: 8px;
  white-space: nowrap;
}

.item > :first-child { margin-right: 22px; }
.item.active { background: #f2f2f2; }
.item kbd { width: 153px; margin-left: auto; color: #666; font: inherit; font-size: 23px; }
.item .more { margin-left: auto; stroke-width: 1.6; }
.item .icon.more:last-child { margin-right: 16px; }

.submenu {
  top: 600px;
  left: 1404px;
  display: grid;
  gap: 8px;
  width: 446px;
  padding: 8px;
}

.submenu .item { position: relative; padding: 2px 0 0 22px; }
.submenu .item > :first-child { margin-right: 24px; }

.keytip {
  position: absolute;
  top: 5px;
  left: 430px;
  padding: 8px;
  background: #767676;
  color: #fff;
  font-size: 23px;
}
```
